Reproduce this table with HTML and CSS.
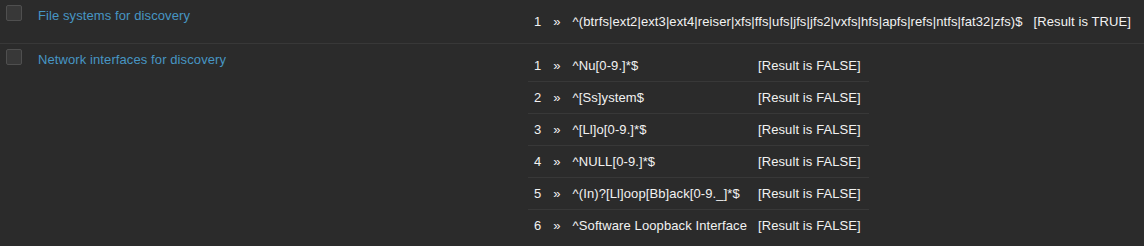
FILE: index.html
```html
<!DOCTYPE html>
<html lang="en">
<head>
<meta charset="utf-8">
<title>Regular expressions</title>
<link rel="stylesheet" href="styles.css">
</head>
<body>
<table class="list">
  <tbody>
    <tr class="row">
      <td class="cell-check"><span class="checkbox"></span></td>
      <td class="cell-name"><a class="link" href="#">File systems for discovery</a></td>
      <td class="cell-expr">
        <table class="sub">
          <tbody>
            <tr>
              <td class="num">1</td><td class="sep">»</td>
              <td class="expr">^(btrfs|ext2|ext3|ext4|reiser|xfs|ffs|ufs|jfs|jfs2|vxfs|hfs|apfs|refs|ntfs|fat32|zfs)$</td>
              <td class="res">[Result is TRUE]</td>
            </tr>
          </tbody>
        </table>
      </td>
    </tr>
    <tr class="row">
      <td class="cell-check"><span class="checkbox"></span></td>
      <td class="cell-name"><a class="link" href="#">Network interfaces for discovery</a></td>
      <td class="cell-expr">
        <table class="sub">
          <tbody>
            <tr><td class="num">1</td><td class="sep">»</td><td class="expr">^Nu[0-9.]*$</td><td class="res">[Result is FALSE]</td></tr>
            <tr><td class="num">2</td><td class="sep">»</td><td class="expr">^[Ss]ystem$</td><td class="res">[Result is FALSE]</td></tr>
            <tr><td class="num">3</td><td class="sep">»</td><td class="expr">^[Ll]o[0-9.]*$</td><td class="res">[Result is FALSE]</td></tr>
            <tr><td class="num">4</td><td class="sep">»</td><td class="expr">^NULL[0-9.]*$</td><td class="res">[Result is FALSE]</td></tr>
            <tr><td class="num">5</td><td class="sep">»</td><td class="expr">^(In)?[Ll]oop[Bb]ack[0-9._]*$</td><td class="res">[Result is FALSE]</td></tr>
            <tr><td class="num">6</td><td class="sep">»</td><td class="expr">^Software Loopback Interface</td><td class="res">[Result is FALSE]</td></tr>
          </tbody>
        </table>
      </td>
    </tr>
  </tbody>
</table>
</body>
</html>
```
FILE: styles.css
```css
html, body {
  margin: 0;
  padding: 0;
  background: #2b2b2b;
  overflow: hidden;
}
body {
  font-family: "Liberation Sans", Arial, sans-serif;
  font-size: 13px;
  letter-spacing: 0.1px;
  line-height: 14px;
  color: #f2f2f2;
}
.list {
  width: 100%;
  border-collapse: collapse;
}
.row {
  border-bottom: 1px solid #383838;
}
.row > td {
  vertical-align: top;
  padding: 0;
}
.cell-check {
  width: 33px;
  padding: 5px 0 0 6px !important;
  box-sizing: border-box;
}
.checkbox {
  display: block;
  width: 14px;
  height: 14px;
  border: 1px solid #4f4f4f;
  border-radius: 2px;
  background: #383838;
}
.cell-name {
  width: 492px;
  padding: 9px 5px 0 5px !important;
  box-sizing: border-box;
}
.link {
  color: #4796c4;
  text-decoration: none;
}
.cell-expr {
  padding: 6px 5px !important;
}
.sub {
  border-collapse: collapse;
}
.sub tr + tr {
  border-top: 1px solid #383838;
}
.sub td {
  padding: 9px 5px 8px 5px;
  white-space: nowrap;
  vertical-align: top;
}
.sub .num {
  padding-left: 6px;
  padding-right: 7px;
}
.sub .sep {
  padding-left: 5px;
  padding-right: 7px;
}
.sub .res {
  padding-left: 6px;
  padding-right: 8px;
}
```
